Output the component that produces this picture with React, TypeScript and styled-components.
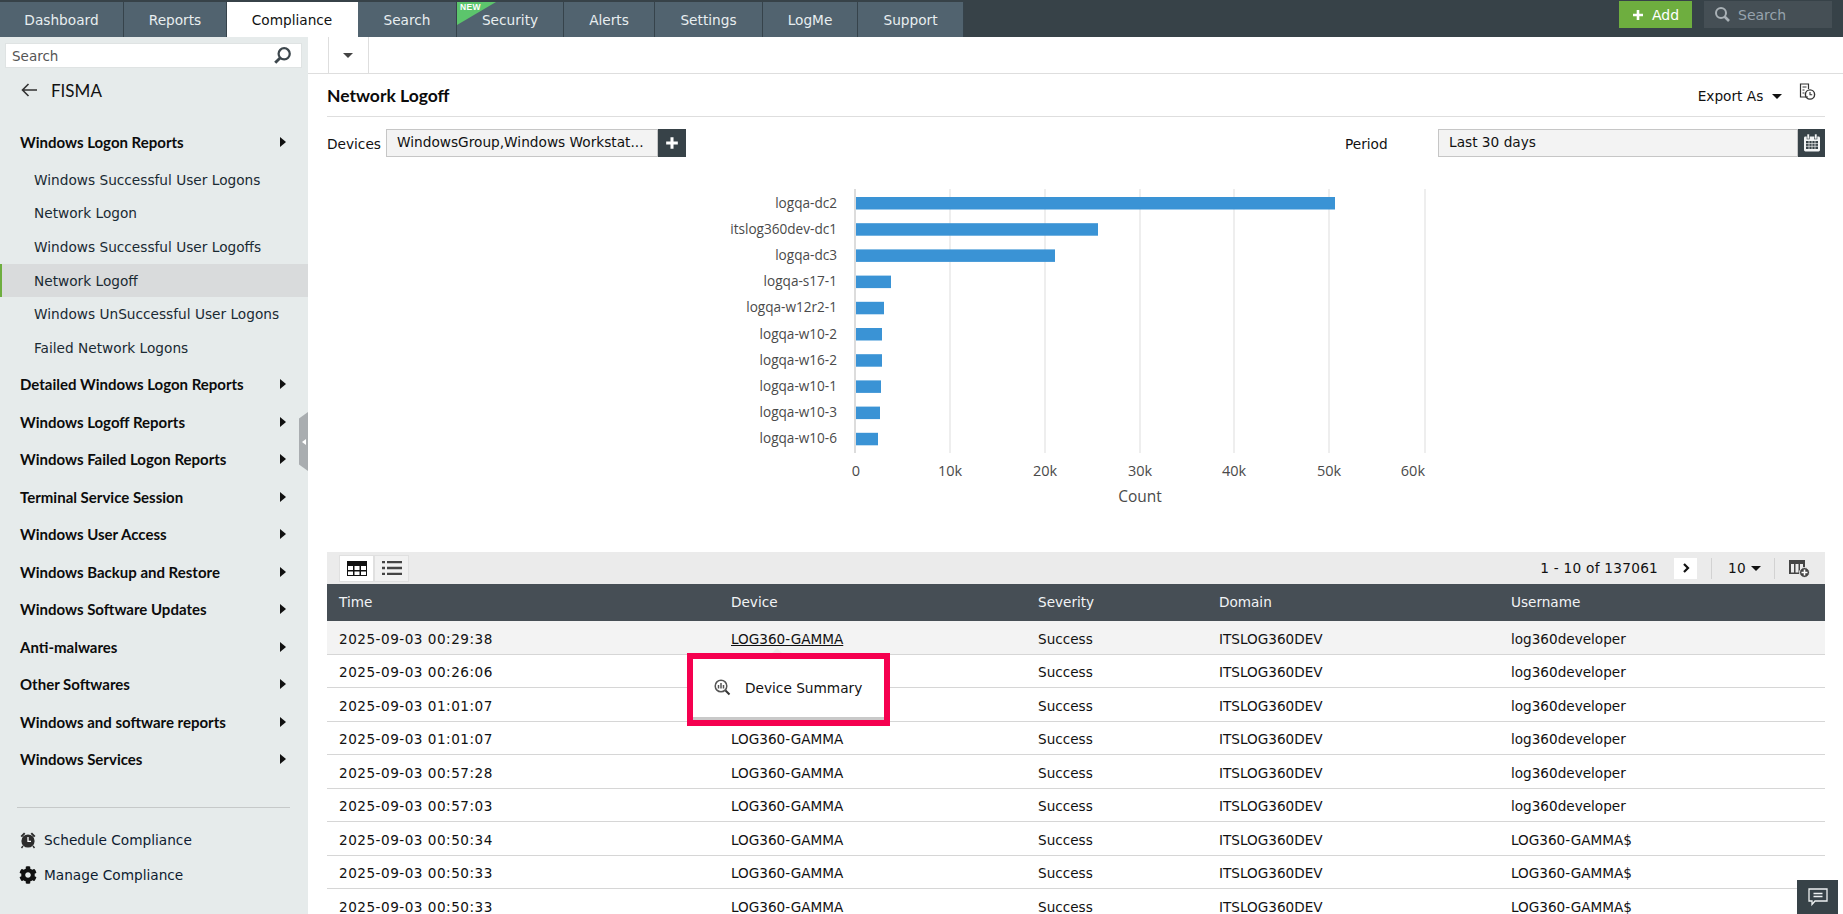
import React from "react";
import styled, { createGlobalStyle } from "styled-components";
import { FaCog } from "react-icons/fa";

const Global = createGlobalStyle`
  html, body { margin: 0; padding: 0; height: 914px; overflow: hidden; background: #fff; }
  body { font-family: "DejaVu Sans", sans-serif; font-size: 13px; color: #111; }
  * { box-sizing: border-box; }
`;

const Page = styled.div`
  width: 1843px; height: 914px; display: flex; flex-direction: column; overflow: hidden; position: relative;
`;
const TopBar = styled.header`
  height: 37px; flex: none; background: #374248; display: flex; align-items: flex-start; justify-content: space-between;
`;
const Tabs = styled.nav`
  display: flex; height: 35px; margin-top: 2px;
`;
const Tab = styled.div<{ $w: number; $active?: boolean }>`
  width: ${p => p.$w}px; height: 35px; position: relative; display: flex; align-items: center; justify-content: center;
  background: ${p => (p.$active ? "#fff" : "#51636f")};
  color: ${p => (p.$active ? "#111" : "#e8eef0")};
  border-right: 1px solid ${p => (p.$active ? "#fff" : "#36434b")};
  font-size: 13.7px;
`;
const NewRibbon = styled.span`
  position: absolute; left: 0; top: 0; width: 39px; height: 23px; background: #5cc56c;
  clip-path: polygon(0 0, 100% 0, 0 100%);
`;
const NewText = styled.span`
  position: absolute; left: 3px; top: 0; font: bold 8.5px "Liberation Sans", sans-serif; color: #fff; letter-spacing: .3px;
`;
const TopRight = styled.div`
  display: flex; gap: 12px; margin: 1px 11px 0 0;
`;
const AddButton = styled.div`
  width: 73px; height: 27px; background: #6eae3f; color: #fff; display: flex; align-items: center; justify-content: center; gap: 8px; font-size: 14px;
`;
const TopSearch = styled.div`
  width: 128px; height: 27px; background: #454f55; color: #97a3ad; display: flex; align-items: center; gap: 7px; padding-left: 10px; font-size: 14px;
`;
const Body = styled.div`
  flex: 1; display: flex; min-height: 0;
`;
const Sidebar = styled.aside`
  width: 308px; flex: none; background: #e6ebeb; position: relative; display: flex; flex-direction: column;
`;
const SideSearch = styled.div`
  margin: 6px 6px 0 5px; height: 25px; background: #fff; border: 1px solid #dfe3e3; display: flex; align-items: center; justify-content: space-between;
  padding: 0 9px 0 6px; color: #555; font-size: 13.5px;
`;
const BackRow = styled.div`
  display: flex; align-items: center; gap: 13px; margin: 10px 0 0 21px; height: 24px; font: 17px Lato, sans-serif; color: #111;
`;
const Category = styled.div<{ $first?: boolean }>`
  height: 37.5px; display: flex; align-items: center; justify-content: space-between; padding: 0 22px 0 20px;
  font: 700 15px Lato, sans-serif; color: #0c0c0c;
  margin-top: ${p => (p.$first ? "21.500px" : "0")};
`;
const Arrow = styled.span`
  width: 0; height: 0; border-left: 6px solid #111; border-top: 5px solid transparent; border-bottom: 5px solid transparent;
`;
const SubItem = styled.div<{ $active?: boolean }>`
  height: 33.6px; display: flex; align-items: center; padding-left: ${p => (p.$active ? "32px" : "34px")};
  font-size: 13.7px; color: #1a2a33;
  background: ${p => (p.$active ? "#d9dbdc" : "transparent")};
  border-left: ${p => (p.$active ? "2px solid #6eae3f" : "none")};
`;
const SubList = styled.div`
  margin: 2px 0 1px;
`;
const SideFoot = styled.div`
  margin: 29px 18px 0 17px; border-top: 1px solid #c6c9c9; padding-top: 20px; display: flex; flex-direction: column; gap: 12px;
`;
const FootItem = styled.div`
  height: 23px; display: flex; align-items: center; gap: 7px; padding-left: 2px; font-size: 13.7px; color: #0e1b30;
`;
const Handle = styled.div`
  position: absolute; right: 0; top: 375px; width: 9px; height: 59px; background: #a9adb0;
  clip-path: polygon(0 11%, 100% 0, 100% 100%, 0 89%);
  display: flex; align-items: center; justify-content: center;
`;
const HandleTip = styled.span`
  width: 0; height: 0; border-right: 4px solid #fff; border-top: 3px solid transparent; border-bottom: 3px solid transparent;
`;
const Main = styled.main`
  flex: 1; min-width: 0; display: flex; flex-direction: column;
`;
const SubBar = styled.div`
  height: 37px; flex: none; border-bottom: 1px solid #dedede; padding-left: 20px;
`;
const CaretCell = styled.div`
  width: 41px; height: 36px; border-left: 1px solid #dedede; border-right: 1px solid #dedede; display: flex; align-items: center; justify-content: center; padding-right: 2px;
`;
const Caret = styled.span<{ $c?: string }>`
  display: inline-block; width: 0; height: 0; border-top: 5px solid ${p => p.$c || "#111"}; border-left: 5px solid transparent; border-right: 5px solid transparent;
`;
const Content = styled.div`
  padding: 0 18px 0 19px; display: flex; flex-direction: column;
`;
const TitleRow = styled.div`
  height: 43px; flex: none; border-bottom: 1px solid #dedede; display: flex; align-items: center; justify-content: space-between;
`;
const Title = styled.h1`
  margin: 0; font: 700 17.5px Lato, sans-serif; color: #0b0b0b;
`;
const ExportWrap = styled.div`
  display: flex; align-items: center; font-size: 13.7px; padding: 2px 9px 0 0;
`;
const ExportIcon = styled.svg`
  margin: -8px 0 0 17px;
`;
const FilterRow = styled.div`
  display: flex; align-items: center; justify-content: space-between; margin-top: 12px; height: 28px;
`;
const FilterGroup = styled.div`
  display: flex; align-items: center;
`;
const Label = styled.span<{ $w: number }>`
  width: ${p => p.$w}px; font-size: 13.7px; padding-top: 2px;
`;
const Input = styled.div<{ $w: number }>`
  width: ${p => p.$w}px; height: 28px; background: #f3f3f3; border: 1px solid #c6c6c6; display: flex; align-items: center; padding: 0 0 3px 10px; font-size: 13.7px; color: #111; white-space: nowrap; overflow: hidden;
`;
const DarkButton = styled.div<{ $w: number }>`
  width: ${p => p.$w}px; height: 28px; background: #374248; display: flex; align-items: center; justify-content: center;
`;
const Chart = styled.svg`
  display: block; margin-top: 3px; flex: none;
`;
const TableBar = styled.div`
  height: 32px; background: #ebebeb; display: flex; align-items: center; justify-content: space-between; padding-left: 12px; flex: none;
`;
const ViewToggle = styled.div`
  display: flex;
`;
const ViewButton = styled.div<{ $on?: boolean }>`
  width: 35px; height: 27px; background: ${p => (p.$on ? "#fff" : "#f1f1f1")}; border: 1px solid #e0e0e0; display: flex; align-items: center; justify-content: center;
`;
const Pager = styled.div`
  display: flex; align-items: center; font-size: 13.7px; height: 100%; letter-spacing: .25px;
`;
const NextButton = styled.div`
  width: 23px; height: 21px; background: #fff; margin-left: 16px; display: flex; align-items: center; justify-content: center;
`;
const Sep = styled.span<{ $ml?: number }>`
  width: 1px; height: 21px; background: #d2d2d2; margin-left: ${p => p.$ml || 0}px;
`;
const PageSize = styled.div`
  display: flex; align-items: center; gap: 5px; padding: 0 13px 0 16px;
`;
const ColumnsIcon = styled.svg`
  margin: 0 15px 0 14px;
`;
const Row = styled.div<{ $head?: boolean; $hover?: boolean }>`
  display: grid; grid-template-columns: 404px 307px 181px 292px 1fr; align-items: center; flex: none;
  height: ${p => (p.$head ? "37px" : "33.5px")};
  padding: ${p => (p.$head ? "0 0 2px" : "3px 0 0")};
  background: ${p => (p.$head ? "#464e55" : p.$hover ? "#f3f3f3" : "#fff")};
  color: ${p => (p.$head ? "#f2f4f5" : "#111")};
  border-bottom: ${p => (p.$head ? "none" : "1px solid #d6d6d6")};
  font-size: 13.6px;
`;
const Cell = styled.div<{ $first?: boolean }>`
  padding-left: ${p => (p.$first ? "12px" : "0")}; white-space: nowrap;
`;
const TimeText = styled.span`
  letter-spacing: .5px;
`;
const DeviceLink = styled.span`
  text-decoration: underline;
`;
const Popup = styled.div`
  position: absolute; left: 687px; top: 653px; width: 203px; height: 73px; background: #fff; border: 6px solid #f5004f; box-shadow: inset 0 -3px 0 #c9c9c9;
  display: flex; align-items: center; gap: 14px; padding: 0 0 4px 21px; font-size: 13.7px; color: #111;
`;
const PopArrow = styled.span`
  position: absolute; left: 772px; top: 648px; width: 0; height: 0; border-bottom: 5px solid #e9e9e9; border-left: 5px solid transparent; border-right: 5px solid transparent;
`;
const ChatButton = styled.div`
  position: absolute; left: 1797px; top: 880px; width: 41px; height: 34px; background: #374248; display: flex; align-items: center; justify-content: center;
`;

const tabs: [string, number][] = [["Dashboard", 124], ["Reports", 103], ["Compliance", 131], ["Search", 99], ["Security", 107], ["Alerts", 91], ["Settings", 108], ["LogMe", 95], ["Support", 106]];
const subs = ["Windows Successful User Logons", "Network Logon", "Windows Successful User Logoffs", "Network Logoff", "Windows UnSuccessful User Logons", "Failed Network Logons"];
const cats = ["Detailed Windows Logon Reports", "Windows Logoff Reports", "Windows Failed Logon Reports", "Terminal Service Session", "Windows User Access", "Windows Backup and Restore", "Windows Software Updates", "Anti-malwares", "Other Softwares", "Windows and software reports", "Windows Services"];
const bars: [string, number][] = [["logqa-dc2", 479], ["itslog360dev-dc1", 242], ["logqa-dc3", 199], ["logqa-s17-1", 35], ["logqa-w12r2-1", 28], ["logqa-w10-2", 26], ["logqa-w16-2", 26], ["logqa-w10-1", 25], ["logqa-w10-3", 24], ["logqa-w10-6", 22]];
const rows: [string, string][] = [
  ["2025-09-03 00:29:38", "log360developer"], ["2025-09-03 00:26:06", "log360developer"], ["2025-09-03 01:01:07", "log360developer"],
  ["2025-09-03 01:01:07", "log360developer"], ["2025-09-03 00:57:28", "log360developer"], ["2025-09-03 00:57:03", "log360developer"],
  ["2025-09-03 00:50:34", "LOG360-GAMMA$"], ["2025-09-03 00:50:33", "LOG360-GAMMA$"], ["2025-09-03 00:50:33", "LOG360-GAMMA$"],
];
const ticks = [0, 95, 190, 285, 379, 474, 570];

const Mag = ({ c, s = 17 }: { c: string; s?: number }) => (
  <svg width={s} height={s} viewBox="0 0 17 17" fill="none"><circle cx="10" cy="7" r="5" stroke={c} strokeWidth="2" /><path d="M6.5 10.5 2 15" stroke={c} strokeWidth="2.6" /></svg>
);
const Plus = ({ s = 12 }: { s?: number }) => (
  <svg width={s} height={s} viewBox="0 0 12 12"><path d="M6 1v10M1 6h10" stroke="#fff" strokeWidth="2.6" /></svg>
);

const x0 = 528;
export default function App() {
  return (
    <Page>
      <Global />
      <TopBar>
        <Tabs>
          {tabs.map(([t, w]) => (
            <Tab key={t} $w={w} $active={t === "Compliance"}>
              {t === "Security" && <NewRibbon />}
              {t === "Security" && <NewText>NEW</NewText>}
              {t}
            </Tab>
          ))}
        </Tabs>
        <TopRight>
          <AddButton><Plus />Add</AddButton>
          <TopSearch>
            <svg width="17" height="17" viewBox="0 0 17 17" fill="none"><circle cx="7" cy="7" r="5" stroke="#a9b1b6" strokeWidth="2" /><path d="M10.5 10.5 15 15" stroke="#a9b1b6" strokeWidth="2.6" /></svg>
            Search
          </TopSearch>
        </TopRight>
      </TopBar>
      <Body>
        <Sidebar>
          <SideSearch>Search<Mag c="#3d474d" s={19} /></SideSearch>
          <BackRow>
            <svg width="17" height="14" viewBox="0 0 17 14" fill="none"><path d="M16 7H2M7.5 1 1.5 7l6 6" stroke="#333" strokeWidth="1.6" /></svg>
            FISMA
          </BackRow>
          <Category $first>Windows Logon Reports<Arrow /></Category>
          <SubList>
            {subs.map(s => <SubItem key={s} $active={s === "Network Logoff"}>{s}</SubItem>)}
          </SubList>
          {cats.map(c => <Category key={c}>{c}<Arrow /></Category>)}
          <SideFoot>
            <FootItem>
              <svg width="18" height="18" viewBox="0 0 18 18"><circle cx="9" cy="10" r="6.6" fill="#2c2c2c" /><path d="M1.5 5 5 1.6l1.4 1.2L3 6.2zM16.5 5 13 1.6l-1.4 1.2L15 6.2z" fill="#2c2c2c" /><path d="M9 6v4.4h3" stroke="#fff" strokeWidth="1.3" fill="none" /><path d="m4 15-1.5 2M14 15l1.5 2" stroke="#2c2c2c" strokeWidth="1.4" /></svg>
              Schedule Compliance
            </FootItem>
            <FootItem><FaCog size={18} color="#111" />Manage Compliance</FootItem>
          </SideFoot>
          <Handle><HandleTip /></Handle>
        </Sidebar>
        <Main>
          <SubBar><CaretCell><Caret $c="#444" /></CaretCell></SubBar>
          <Content>
            <TitleRow>
              <Title>Network Logoff</Title>
              <ExportWrap>
                Export As&nbsp;&nbsp;<Caret />
                <ExportIcon width="17" height="18" viewBox="0 0 17 18" fill="none">
                  <path d="M9 14H1.5V1h8v5" stroke="#333" strokeWidth="1.2" />
                  <path d="M3.5 4h4M3.5 7h2M3.5 10h2" stroke="#333" strokeWidth="1.2" />
                  <circle cx="11" cy="11.5" r="4.6" stroke="#333" strokeWidth="1.4" />
                  <path d="M11 9v2.7h2.2" stroke="#333" strokeWidth="1.1" />
                </ExportIcon>
              </ExportWrap>
            </TitleRow>
            <FilterRow>
              <FilterGroup>
                <Label $w={59}>Devices</Label>
                <Input $w={272}>WindowsGroup,Windows Workstat...</Input>
                <DarkButton $w={28}><Plus s={14} /></DarkButton>
              </FilterGroup>
              <FilterGroup>
                <Label $w={93}>Period</Label>
                <Input $w={360}>Last 30 days</Input>
                <DarkButton $w={27}>
                  <svg width="20" height="20" viewBox="0 0 20 20"><rect x="2" y="3.5" width="16" height="15" rx="1.4" fill="#f2f4f5" /><rect x="5" y="1" width="2.4" height="5" fill="#f2f4f5" stroke="#374248" strokeWidth=".6" /><rect x="12.6" y="1" width="2.4" height="5" fill="#f2f4f5" stroke="#374248" strokeWidth=".6" /><path d="M4 8h12v8H4z" fill="#374248" /><path d="M4 10.6h12M4 13.3h12M7 8v8M10 8v8M13 8v8" stroke="#f2f4f5" strokeWidth=".7" /></svg>
                </DarkButton>
              </FilterGroup>
            </FilterRow>
            <Chart width="1498" height="392" viewBox="0 0 1498 392">
              {ticks.map((d, i) => (
                <line key={d} x1={x0 + d} x2={x0 + d} y1="29" y2="293" stroke={i === 0 ? "#d0d0d0" : "#e8e8e8"} strokeWidth="1.5" />
              ))}
              {bars.map(([n, w], i) => (
                <g key={n}>
                  <rect x={x0 + 1} y={37 + i * 26.2} width={w} height="12.5" fill="#3a93d5" />
                  <text x="510" y={47.5 + i * 26.2} textAnchor="end" fontFamily="'Open Sans', sans-serif" fontSize="13.6" fill="#4a4a4a">{n}</text>
                </g>
              ))}
              {["0", "10k", "20k", "30k", "40k", "50k", "60k"].map((t, i) => (
                <text key={t} x={x0 + ticks[i] + (i === 0 ? 1 : 0)} y="316" textAnchor={i === 6 ? "end" : "middle"} fontFamily="'Open Sans', sans-serif" fontSize="14.5" fill="#4a4a4a">{t}</text>
              ))}
              <text x={x0 + 285} y="342" textAnchor="middle" fontFamily="'Open Sans', sans-serif" fontSize="15.5" fill="#4a4a4a">Count</text>
            </Chart>
            <TableBar>
              <ViewToggle>
                <ViewButton $on>
                  <svg width="20" height="15" viewBox="0 0 20 15"><rect width="20" height="15" fill="#111" /><path d="M1 5h5v4H1zM7.5 5h5v4h-5zM14 5h5v4h-5zM1 10.5h5V14H1zM7.5 10.5h5V14h-5zM14 10.5h5V14h-5z" fill="#fff" /></svg>
                </ViewButton>
                <ViewButton>
                  <svg width="20" height="14" viewBox="0 0 20 14"><path d="M0 1h3M5 1h15M0 7h3M5 7h15M0 13h3M5 13h15" stroke="#444" strokeWidth="2.6" /></svg>
                </ViewButton>
              </ViewToggle>
              <Pager>
                1 - 10 of 137061
                <NextButton>
                  <svg width="8" height="10" viewBox="0 0 8 10" fill="none"><path d="m2 1 4 4-4 4" stroke="#111" strokeWidth="2.2" /></svg>
                </NextButton>
                <Sep $ml={14} />
                <PageSize>10<Caret /></PageSize>
                <Sep />
                <ColumnsIcon width="21" height="19" viewBox="0 0 21 19"><path d="M0 1h16v14H0z" fill="#444" /><path d="M2 5h3v8.500H2zM6.500 5h3v8.500h-3zM11 5h3v8.500h-3z" fill="#ebebeb" /><circle cx="15.500" cy="13.500" r="5" fill="#444" stroke="#ebebeb" /><path d="M15.500 10.500v6M12.500 13.500h6" stroke="#fff" strokeWidth="1.6" /></ColumnsIcon>
              </Pager>
            </TableBar>
            <Row $head>
              <Cell $first>Time</Cell><Cell>Device</Cell><Cell>Severity</Cell><Cell>Domain</Cell><Cell>Username</Cell>
            </Row>
            {rows.map(([t, u], i) => (
              <Row key={i} $hover={i === 0}>
                <Cell $first><TimeText>{t}</TimeText></Cell>
                <Cell>{i === 0 ? <DeviceLink>LOG360-GAMMA</DeviceLink> : "LOG360-GAMMA"}</Cell>
                <Cell>Success</Cell>
                <Cell>ITSLOG360DEV</Cell>
                <Cell>{u}</Cell>
              </Row>
            ))}
          </Content>
        </Main>
      </Body>
      <PopArrow />
      <Popup>
        <svg width="17" height="17" viewBox="0 0 17 17" fill="none"><circle cx="7" cy="7" r="5.800" stroke="#555" strokeWidth="1.500" /><path d="M4.500 9.500V6M7 9.500V4M9.500 9.500V6" stroke="#555" strokeWidth="1.500" /><path d="m11.500 11.500 4 4" stroke="#333" strokeWidth="2" /></svg>
        Device Summary
      </Popup>
      <ChatButton>
        <svg width="20" height="20" viewBox="0 0 20 20" fill="none"><path d="M1 2h18v12H7l-3 3.500V14H1z" stroke="#eef1f2" strokeWidth="1.300" /><path d="M5.500 6.500h9M5.500 9.500h9" stroke="#eef1f2" strokeWidth="1.500" /></svg>
      </ChatButton>
    </Page>
  );
}
